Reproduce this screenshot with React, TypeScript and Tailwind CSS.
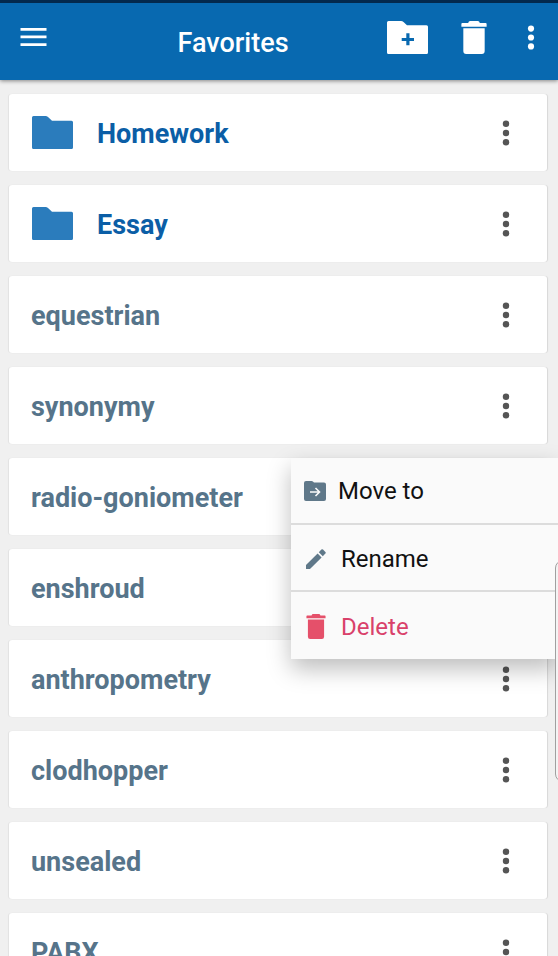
import { useState } from 'react';

interface Entry {
  id: string;
  label: string;
  folder?: boolean;
}

const entries: Entry[] = [
  { id: 'homework', label: 'Homework', folder: true },
  { id: 'essay', label: 'Essay', folder: true },
  { id: 'equestrian', label: 'equestrian' },
  { id: 'synonymy', label: 'synonymy' },
  { id: 'radio-goniometer', label: 'radio-goniometer' },
  { id: 'enshroud', label: 'enshroud' },
  { id: 'anthropometry', label: 'anthropometry' },
  { id: 'clodhopper', label: 'clodhopper' },
  { id: 'unsealed', label: 'unsealed' },
  { id: 'pabx', label: 'PABX' },
];

interface IconProps {
  className?: string;
}

function MenuIcon({ className }: IconProps) {
  return (
    <svg viewBox="0 0 26 18" className={className} fill="currentColor" aria-hidden="true">
      <path d="M0 0h26v2.7H0zM0 7.6h26v2.7H0zM0 15.2h26v2.7H0z" />
    </svg>
  );
}

function DotsIcon({ className }: IconProps) {
  return (
    <svg viewBox="0 0 8 26" className={className} fill="currentColor" aria-hidden="true">
      <circle cx="4" cy="3.7" r="3.2" />
      <circle cx="4" cy="13" r="3.2" />
      <circle cx="4" cy="22.3" r="3.2" />
    </svg>
  );
}

function FolderIcon({ className }: IconProps) {
  return (
    <svg viewBox="0 0 41 33" className={className} fill="currentColor" aria-hidden="true">
      <path d="M1.5 0H13.5Q15 0 16 1L20 4.8H39.5Q41 4.8 41 6.3V31.5Q41 33 39.5 33H1.5Q0 33 0 31.5V1.5Q0 0 1.5 0z" />
    </svg>
  );
}

function FolderPlusIcon({ className }: IconProps) {
  return (
    <svg viewBox="0 0 41 33" className={className} fill="currentColor" aria-hidden="true">
      <path
        fillRule="evenodd"
        d="M1.5 0H14Q15.5 0 16.5 1L20 4.3H39.5Q41 4.3 41 5.8V31.5Q41 33 39.5 33H1.5Q0 33 0 31.5V1.5Q0 0 1.5 0zM19.3 12.3V17H14.7V20H19.3V24.3H22.5V20H27V17H22.5V12.3z"
      />
    </svg>
  );
}

function TrashIcon({ className }: IconProps) {
  return (
    <svg viewBox="0 0 26 34" className={className} fill="currentColor" aria-hidden="true">
      <path d="M0 3Q0 2 1 2H7Q7.5 0 9 0H17Q18.5 0 19 2H25Q26 2 26 3V5.8H0zM2 7.5H24V31Q24 34 21 34H5Q2 34 2 31z" />
    </svg>
  );
}

function MoveIcon({ className }: IconProps) {
  return (
    <svg viewBox="0 0 22 20" className={className} aria-hidden="true">
      <path
        fill="currentColor"
        d="M2 0H7.5Q8.5 0 9.2 .8L10 1.5H20Q22 1.5 22 3.5V18Q22 20 20 20H2Q0 20 0 18V2Q0 0 2 0z"
      />
      <path d="M6 11H15M11.5 7L15.5 11L11.5 15" fill="none" stroke="#fafafa" strokeWidth="1.6" />
    </svg>
  );
}

function PencilIcon({ className }: IconProps) {
  return (
    <svg viewBox="0 0 20 20" className={className} fill="currentColor" aria-hidden="true">
      <path d="M0 16L11.6 4.4L15.6 8.4L4 20H0zM12.8 3.2L15.4 .6Q16.2 -.2 17 .6L19.4 3Q20.2 3.800 19.4 4.600L16.8 7.200z" />
    </svg>
  );
}

function ContextMenu() {
  return (
    <div
      role="menu"
      className="absolute top-0 -right-[11px] z-10 w-[267px] divide-y-2 divide-[#dcdcdc] bg-[#fafafa] text-2xl text-[#111111] shadow-[0_10px_22px_rgba(0,0,0,0.26)]"
    >
      <button role="menuitem" className="flex h-[67px] w-full items-center gap-3 pl-[13px]">
        <MoveIcon className="h-5 w-[22px] text-[#5f7889]" />
        Move to
      </button>
      <button role="menuitem" className="flex h-[67px] w-full items-center gap-[15px] pt-0.5 pl-[15px]">
        <PencilIcon className="size-5 text-[#5f7889]" />
        Rename
      </button>
      <button role="menuitem" className="flex h-[67px] w-full items-center gap-[15px] pt-0.5 pl-[15px] text-[#d9416a]">
        <TrashIcon className="h-[25px] w-5 text-[#e5506a]" />
        Delete
      </button>
    </div>
  );
}

export default function App() {
  const [openId, setOpenId] = useState<string | null>('radio-goniometer');

  return (
    <div className="relative flex h-screen flex-col overflow-hidden bg-[#f0f0f0] font-[Roboto,sans-serif]">
      {/* App bar */}
      <header className="z-20 flex h-20 shrink-0 items-start border-t-3 border-[#03294d] bg-[#0869b0] pr-[23px] pl-5 text-white shadow-[0_1px_4px_rgba(0,0,0,0.45)]">
        <button aria-label="Menu" className="mt-[25px]">
          <MenuIcon className="h-[18px] w-[27px]" />
        </button>
        <h1 className="mt-5 flex-1 pl-8 text-center text-[27px] leading-10 font-medium">Favorites</h1>
        <div className="flex items-start">
          <button aria-label="New folder" className="mt-[18px]">
            <FolderPlusIcon className="h-[33px] w-[41px]" />
          </button>
          <button aria-label="Delete" className="mt-[18px] ml-[33px]">
            <TrashIcon className="h-[33px] w-[26px]" />
          </button>
          <button aria-label="More options" className="mt-[22px] ml-10">
            <DotsIcon className="h-[25px] w-2" />
          </button>
        </div>
      </header>

      {/* Word list */}
      <ul className="flex flex-col gap-[14px] pt-[14px] pr-[11px] pl-[9px]">
        {entries.map((entry) => (
          <li
            key={entry.id}
            className="relative flex h-[77px] shrink-0 items-center rounded-[3px] bg-white pr-[37px] pl-[22px] shadow-[-1px_0_1px_rgba(0,0,0,0.06),1px_0_1px_rgba(0,0,0,0.1)]"
          >
            {entry.folder && <FolderIcon className="mr-6 ml-px h-[33px] w-[41px] text-[#2b7cbc]" />}
            <span
              className={`flex-1 pt-0.5 text-[27px] leading-8 font-bold ${
                entry.folder ? 'text-[#0b5ea6]' : 'text-[#56748a]'
              }`}
            >
              {entry.label}
            </span>
            <button
              aria-label={`Options for ${entry.label}`}
              onClick={() => setOpenId(openId === entry.id ? null : entry.id)}
            >
              <DotsIcon className="h-[26px] w-2 text-[#555555]" />
            </button>
            {openId === entry.id && <ContextMenu />}
          </li>
        ))}
      </ul>

      {/* Edge panel handle */}
      <div className="absolute top-[560px] -right-2 z-30 h-[222px] w-[11px] rounded-l-lg border border-[#a0a0a0] bg-[#f4f4f4]" />
    </div>
  );
}
